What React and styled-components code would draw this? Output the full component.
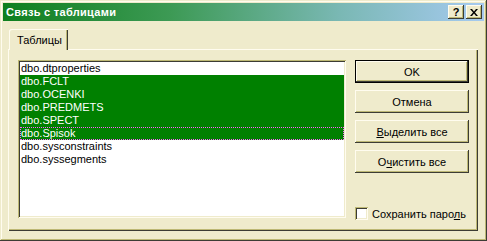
import React from 'react'
import styled, { createGlobalStyle } from 'styled-components'

const face = '#efebcc'
const light = '#fffcef'
const shadow = '#bdb874'
const dark = '#3c3c34'

const Global = createGlobalStyle`
    html, body {
        margin: 0;
        padding: 0;
        background: ${face};
    }
    body {
        font-family: "Liberation Sans", Arial, sans-serif;
        font-size: 11px;
        color: #000;
    }
`

const tables = [
    { name: 'dbo.dtproperties' },
    { name: 'dbo.FCLT', selected: true },
    { name: 'dbo.OCENKI', selected: true },
    { name: 'dbo.PREDMETS', selected: true },
    { name: 'dbo.SPECT', selected: true },
    { name: 'dbo.Spisok', selected: true, focused: true },
    { name: 'dbo.sysconstraints' },
    { name: 'dbo.syssegments' },
]

function App() {
    return (
        <>
            <Global />
            <Window>
                <TitleBar>
                    <Caption>Связь с таблицами</Caption>
                    <CaptionButtons>
                        <CaptionButton>?</CaptionButton>
                        <CaptionButton>
                            <svg width="8" height="7" viewBox="0 0 8 7">
                                <path d="M0 0h2l2 2.5L6 0h2L5 3.5 8 7H6L4 4.5 2 7H0l3-3.5z" fill="#000" />
                            </svg>
                        </CaptionButton>
                    </CaptionButtons>
                </TitleBar>
                <Body>
                    <Tabs>
                        <Tab>Таблицы</Tab>
                    </Tabs>
                    <Panel>
                        <ListBox>
                            {tables.map(t => (
                                <Item key={t.name} selected={t.selected} focused={t.focused}>
                                    {t.name}
                                </Item>
                            ))}
                        </ListBox>
                        <Side>
                            <Button isDefault>OK</Button>
                            <Button>Отмена</Button>
                            <Button><u>В</u>ыделить все</Button>
                            <Button>О<u>ч</u>истить все</Button>
                            <Spacer />
                            <CheckRow>
                                <CheckBox />
                                <span>Сохранить паро<u>л</u>ь</span>
                            </CheckRow>
                        </Side>
                    </Panel>
                </Body>
            </Window>
        </>
    )
}

export default App

const Window = styled.div`
    box-sizing: border-box;
    width: 487px;
    height: 241px;
    padding: 3px;
    background: ${face};
    box-shadow: inset -1px -1px 0 ${dark}, inset 1px 1px 0 ${face},
        inset -2px -2px 0 ${shadow}, inset 2px 2px 0 ${light};
    display: flex;
    flex-direction: column;
`

const TitleBar = styled.div`
    height: 18px;
    flex-shrink: 0;
    display: flex;
    align-items: center;
    justify-content: space-between;
    padding: 0 2px 0 3px;
    background: linear-gradient(to right, #0e7f1e, #3d9a55 35%, #7ab8b4 70%, #a6caf0);
`

const Caption = styled.span`
    color: #fff;
    font-weight: bold;
    font-size: 11px;
    letter-spacing: 0.3px;
`

const CaptionButtons = styled.div`
    display: flex;
    gap: 2px;
`

const CaptionButton = styled.div`
    box-sizing: border-box;
    width: 16px;
    height: 14px;
    display: flex;
    align-items: center;
    justify-content: center;
    background: ${face};
    font-weight: bold;
    font-size: 11px;
    line-height: 1;
    box-shadow: inset -1px -1px 0 ${dark}, inset 1px 1px 0 ${light},
        inset -2px -2px 0 ${shadow};
`

const Body = styled.div`
    flex: 1;
    display: flex;
    flex-direction: column;
    padding: 8px 6px 7px 5px;
`

const Tabs = styled.div`
    display: flex;
    padding-left: 1px;
    position: relative;
    z-index: 1;
`

const Tab = styled.div`
    box-sizing: border-box;
    width: 59px;
    height: 21px;
    padding: 5px 0 0 8px;
    background: ${face};
    border-top-left-radius: 2px;
    box-shadow: inset 1px 1px 0 ${light}, inset -1px 0 0 ${dark},
        inset -2px 0 0 ${shadow};
    margin-bottom: -1px;
`

const Panel = styled.div`
    box-sizing: border-box;
    height: 182px;
    display: flex;
    padding: 11px 9px 12px 10px;
    box-shadow: inset 1px 1px 0 ${light}, inset -1px -1px 0 ${dark},
        inset -2px -2px 0 ${shadow};
`

const ListBox = styled.div`
    box-sizing: border-box;
    width: 328px;
    height: 158px;
    padding: 2px;
    background: #fff;
    box-shadow: inset 1px 1px 0 ${shadow}, inset -1px -1px 0 ${light},
        inset 2px 2px 0 ${dark}, inset -2px -2px 0 ${face};
`

const Item = styled.div`
    box-sizing: border-box;
    height: 13px;
    line-height: 13px;
    padding-left: 1px;
    white-space: nowrap;
    background: ${p => (p.selected ? '#008000' : 'transparent')};
    color: ${p => (p.selected ? '#fff' : '#000')};
    outline: ${p => (p.focused ? '1px dotted #ff60ff' : 'none')};
    outline-offset: -1px;
`

const Side = styled.div`
    flex: 1;
    display: flex;
    flex-direction: column;
    align-items: flex-end;
    gap: 7px;
`

const Button = styled.div`
    box-sizing: border-box;
    width: 114px;
    height: 23px;
    display: flex;
    align-items: center;
    justify-content: center;
    background: ${face};
    box-shadow: ${p =>
        p.isDefault
            ? `inset 0 0 0 1px #000, inset -2px -2px 0 ${dark}, inset 2px 2px 0 ${light}, inset -3px -3px 0 ${shadow}`
            : `inset -1px -1px 0 ${dark}, inset 1px 1px 0 ${light}, inset -2px -2px 0 ${shadow}`};
`

const Spacer = styled.div`
    flex: 1;
`

const CheckRow = styled.div`
    width: 114px;
    display: flex;
    align-items: center;
    gap: 4px;
    white-space: nowrap;
    margin-bottom: -1px;
`

const CheckBox = styled.div`
    box-sizing: border-box;
    flex-shrink: 0;
    width: 13px;
    height: 13px;
    background: #fff;
    box-shadow: inset 1px 1px 0 ${shadow}, inset -1px -1px 0 ${light},
        inset 2px 2px 0 ${dark}, inset -2px -2px 0 ${face};
`
